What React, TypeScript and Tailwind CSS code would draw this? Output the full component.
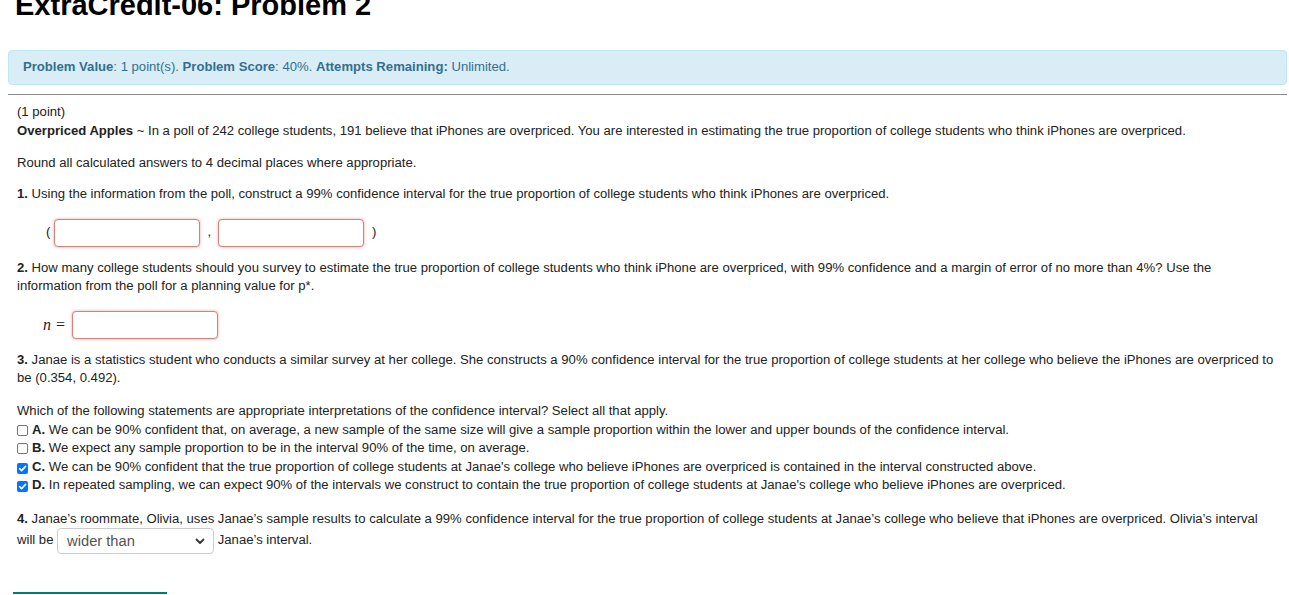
import React from "react";

const Check = ({ checked }: { checked?: boolean }) =>
  checked ? (
    <span className="inline-flex items-center justify-center w-[11px] h-[11px] rounded-[2px] bg-[#0075ff] align-[-2px] mr-[4px]">
      <svg width="9" height="9" viewBox="0 0 10 10">
        <path d="M1.8 5.2 L4 7.4 L8.4 2.6" fill="none" stroke="#fff" strokeWidth="1.8" strokeLinecap="round" strokeLinejoin="round" />
      </svg>
    </span>
  ) : (
    <span className="inline-block w-[11px] h-[11px] rounded-[2px] border border-[#767676] bg-white align-[-2px] mr-[4px]" />
  );

const Field = () => (
  <span className="block w-[146px] h-[28px] rounded-[4px] border border-[#d8807c] bg-white shadow-[0_0_3px_rgba(217,83,79,0.55)]" />
);

export default function App() {
  return (
    <div className="font-['Liberation_Sans',Arial,sans-serif] text-[#222] bg-white h-[595px] overflow-hidden">
      <div className="ml-[8px] w-[1279px]">
        <h1 className="-mt-[10px] pl-[7px] text-[29px] leading-[1.1] font-bold text-black">
          ExtraCredit-06: Problem 2
        </h1>
        <div className="mt-[28px] rounded-[4px] border border-[#bce8f1] bg-[#d9edf7] px-[14px] py-[7.5px] text-[13.12px] leading-[18.57px] text-[#31708f]">
          <b>Problem Value</b>: 1 point(s). <b>Problem Score</b>: 40%. <b>Attempts Remaining:</b> Unlimited.
        </div>
        <div className="mt-[9px] border-t border-[#8a8a8a]" />
        <div className="pl-[9px] pr-[11px] pt-[8px] text-[13.12px] leading-[18.57px]">
          <p>
            (1 point)
            <br />
            <b>Overpriced Apples</b> ~ In a poll of 242 college students, 191 believe that iPhones are overpriced. You are interested in estimating the true proportion of college students who think iPhones are overpriced.
          </p>
          <p className="mt-[13px]">Round all calculated answers to 4 decimal places where appropriate.</p>
          <p className="mt-[13px]">
            <b>1.</b> Using the information from the poll, construct a 99% confidence interval for the true proportion of college students who think iPhones are overpriced.
          </p>
          <div className="mt-[15px] flex items-center pl-[29px] h-[28px]">
            <span>(</span>
            <span className="ml-[4px]">
              <Field />
            </span>
            <span className="ml-[7px]">,</span>
            <span className="ml-[7px]">
              <Field />
            </span>
            <span className="ml-[8px]">)</span>
          </div>
          <p className="mt-[12px]">
            <b>2.</b> How many college students should you survey to estimate the true proportion of college students who think iPhone are overpriced, with 99% confidence and a margin of error of no more than 4%? Use the information from the poll for a planning value for p*.
          </p>
          <div className="mt-[15px] flex items-center pl-[26px] h-[28px]">
            <span className="font-['Liberation_Serif',serif] italic text-[16px]">n</span>
            <span className="ml-[5px] font-['Liberation_Serif',serif] text-[16px]">=</span>
            <span className="ml-[7px]">
              <Field />
            </span>
          </div>
          <p className="mt-[12px]">
            <b>3.</b> Janae is a statistics student who conducts a similar survey at her college. She constructs a 90% confidence interval for the true proportion of college students at her college who believe the iPhones are overpriced to be (0.354, 0.492).
          </p>
          <div className="mt-[14px]">
            <div>Which of the following statements are appropriate interpretations of the confidence interval? Select all that apply.</div>
            <div>
              <Check />
              <b>A.</b> We can be 90% confident that, on average, a new sample of the same size will give a sample proportion within the lower and upper bounds of the confidence interval.
            </div>
            <div>
              <Check />
              <b>B.</b> We expect any sample proportion to be in the interval 90% of the time, on average.
            </div>
            <div>
              <Check checked />
              <b>C.</b> We can be 90% confident that the true proportion of college students at Janae's college who believe iPhones are overpriced is contained in the interval constructed above.
            </div>
            <div>
              <Check checked />
              <b>D.</b> In repeated sampling, we can expect 90% of the intervals we construct to contain the true proportion of college students at Janae's college who believe iPhones are overpriced.
            </div>
          </div>
          <p className="mt-[15px]">
            <b>4.</b> Janae’s roommate, Olivia, uses Janae’s sample results to calculate a 99% confidence interval for the true proportion of college students at Janae’s college who believe that iPhones are overpriced. Olivia’s interval will be{" "}
            <span className="inline-flex items-center justify-between align-middle w-[157px] h-[26px] rounded-[4px] border border-[#ccc] bg-white pl-[9px] pr-[8px] text-[14.7px] text-[#555]">
              <span>wider than</span>
              <svg width="10" height="7" viewBox="0 0 10 7">
                <path d="M1.5 1.5 L5 5 L8.5 1.5" fill="none" stroke="#333" strokeWidth="1.8" strokeLinecap="round" strokeLinejoin="round" />
              </svg>
            </span>{" "}
            Janae’s interval.
          </p>
          <div className="mt-[38px] -ml-[4px] w-[154px] h-[30px] border-t-2 border-[#007a7a] bg-white" />
        </div>
      </div>
    </div>
  );
}
